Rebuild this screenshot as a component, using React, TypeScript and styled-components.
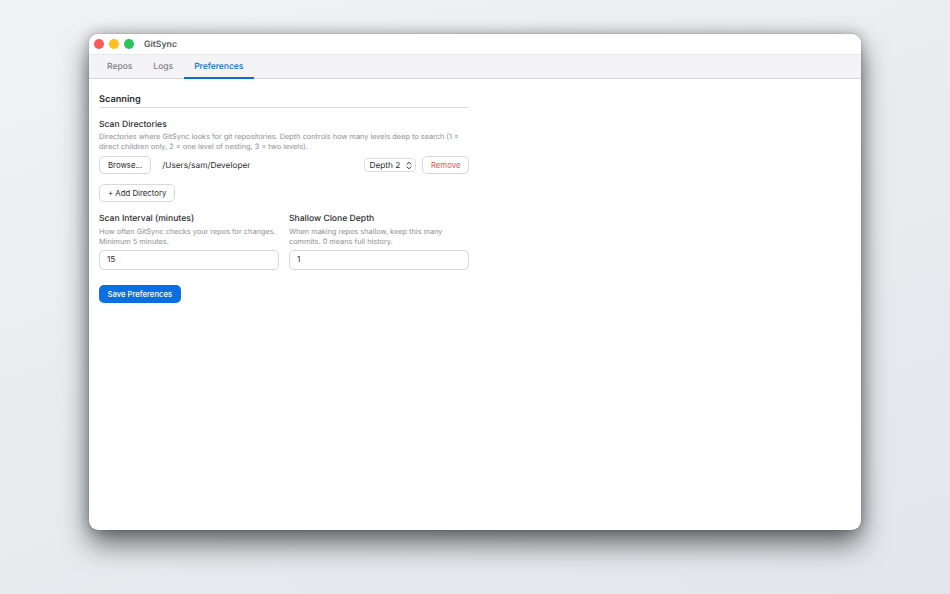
import styled, { createGlobalStyle } from "styled-components";

const GlobalStyle = createGlobalStyle`
  html, body {
    margin: 0;
    padding: 0;
  }
  body {
    width: 950px;
    height: 594px;
    overflow: hidden;
    font-family: Inter, "Liberation Sans", sans-serif;
    text-rendering: geometricPrecision;
  }
`;

const Desktop = styled.div`
  width: 950px;
  height: 594px;
  box-sizing: border-box;
  padding: 34px 89px 64px;
  background: linear-gradient(160deg, #f0f2f4 0%, #e9ebef 50%, #e3e6eb 100%);
`;

const Window = styled.div`
  height: 496px;
  border-radius: 9px;
  background: #fff;
  overflow: hidden;
  box-shadow: 0 0 1px rgba(0, 0, 0, 0.45), 0 14px 28px rgba(0, 0, 0, 0.55),
    0 0 14px rgba(0, 0, 0, 0.28);
`;

const TitleBar = styled.div`
  height: 20px;
  display: flex;
  align-items: center;
  padding-left: 5px;
  background: #fff;
`;

const Light = styled.span<{ color: string }>`
  width: 10px;
  height: 10px;
  border-radius: 50%;
  margin-right: 5px;
  background: ${({ color }) => color};
`;

const AppName = styled.span`
  margin-left: 5px;
  padding-top: 1px;
  font-size: 8.7px;
  font-weight: 600;
  color: #5a5a5d;
`;

const TabBar = styled.div`
  height: 25px;
  box-sizing: border-box;
  display: flex;
  gap: 1px;
  padding-left: 8px;
  background: #f4f4f6;
  border-top: 1px solid #e8e8ea;
  border-bottom: 1px solid #d6d6d9;
`;

const Tab = styled.div<{ active?: boolean }>`
  display: flex;
  align-items: center;
  padding: 1px ${({ active }) => (active ? "10.5px" : "10px")} 0 10px;
  margin-bottom: -1px;
  font-size: 8.5px;
  font-weight: 500;
  color: ${({ active }) => (active ? "#0a6fd4" : "#808085")};
  border-bottom: 2px solid ${({ active }) => (active ? "#0a6fd4" : "transparent")};
`;

const Content = styled.div`
  width: 370px;
  padding: 13px 10px;
`;

const SectionTitle = styled.h2`
  margin: 0 0 10.5px;
  padding: 1px 0;
  font-size: 9.2px;
  line-height: 13px;
  font-weight: 600;
  color: #2a2a2c;
  border-bottom: 1px solid #dcdcdf;
`;

const Label = styled.div`
  font-size: 8.6px;
  line-height: 12px;
  font-weight: 500;
  color: #2a2a2c;
`;

const Hint = styled.div`
  margin-top: 1.5px;
  font-size: 7.35px;
  line-height: 10px;
  color: #8e8e93;
`;

const DirRow = styled.div`
  display: flex;
  align-items: center;
  margin-top: 4px;
`;

const Button = styled.button<{ danger?: boolean }>`
  height: 18px;
  box-sizing: border-box;
  padding: 0 ${({ danger }) => (danger ? "7.5px" : "8px")};
  border: 1px solid #d8d8db;
  border-radius: 5px;
  background: #fff;
  font-family: inherit;
  font-size: 7.8px;
  font-weight: 400;
  color: ${({ danger }) => (danger ? "#ef5350" : "#2a2a2c")};
`;

const AddButton = styled(Button)`
  display: block;
  margin-top: 10px;
`;

const DirPath = styled.span`
  flex: 1;
  margin-left: 11px;
  padding-top: 1px;
  font-size: 8.3px;
  color: #2a2a2c;
`;

const DepthSelect = styled.div`
  width: 52px;
  height: 14px;
  box-sizing: border-box;
  display: flex;
  align-items: center;
  justify-content: space-between;
  padding: 1px 3px 0 4px;
  margin-right: 6px;
  border: 1px solid #dcdcdf;
  border-radius: 4px;
  background: #fff;
  font-size: 8.3px;
  color: #2a2a2c;
`;

const FieldGrid = styled.div`
  display: grid;
  grid-template-columns: 1fr 1fr;
  gap: 10px;
  margin-top: 11px;
`;

const Field = styled.div`
  min-width: 0;
`;

const NumberBox = styled.div`
  height: 20px;
  box-sizing: border-box;
  display: flex;
  align-items: center;
  margin-top: 3px;
  padding: 1px 7px 0;
  border: 1px solid #d8d8db;
  border-radius: 5px;
  font-size: 8.3px;
  color: #2a2a2c;
`;

const SaveButton = styled.button`
  display: block;
  height: 18px;
  margin-top: 15.5px;
  padding: 0 8.5px;
  border: none;
  border-radius: 5px;
  background: #0a6fe0;
  font-family: inherit;
  font-size: 7.7px;
  font-weight: 500;
  color: #fff;
`;

const Chevrons = () => (
  <svg width="6" height="9" viewBox="0 0 6 9" fill="none" stroke="#2a2a2c" strokeWidth="1" strokeLinecap="round" strokeLinejoin="round">
    <path d="M1 3.2 3 1.2l2 2" />
    <path d="M1 5.8l2 2 2-2" />
  </svg>
);

export default function App() {
  return (
    <>
      <GlobalStyle />
      <Desktop>
        <Window>
          <TitleBar>
            <Light color="#fb5a5a" />
            <Light color="#fdbf1c" />
            <Light color="#2cc45a" />
            <AppName>GitSync</AppName>
          </TitleBar>
          <TabBar>
            <Tab>Repos</Tab>
            <Tab>Logs</Tab>
            <Tab active>Preferences</Tab>
          </TabBar>
          <Content>
            <SectionTitle>Scanning</SectionTitle>
            <Label>Scan Directories</Label>
            <Hint>
              Directories where GitSync looks for git repositories. Depth controls how many levels deep to search (1 = direct children only, 2 = one level of nesting, 3 = two levels).
            </Hint>
            <DirRow>
              <Button>Browse...</Button>
              <DirPath>/Users/sam/Developer</DirPath>
              <DepthSelect>
                Depth 2
                <Chevrons />
              </DepthSelect>
              <Button danger>Remove</Button>
            </DirRow>
            <AddButton>+ Add Directory</AddButton>
            <FieldGrid>
              <Field>
                <Label>Scan Interval (minutes)</Label>
                <Hint>How often GitSync checks your repos for changes. Minimum 5 minutes.</Hint>
                <NumberBox>15</NumberBox>
              </Field>
              <Field>
                <Label>Shallow Clone Depth</Label>
                <Hint>When making repos shallow, keep this many commits. 0 means full history.</Hint>
                <NumberBox>1</NumberBox>
              </Field>
            </FieldGrid>
            <SaveButton>Save Preferences</SaveButton>
          </Content>
        </Window>
      </Desktop>
    </>
  );
}
